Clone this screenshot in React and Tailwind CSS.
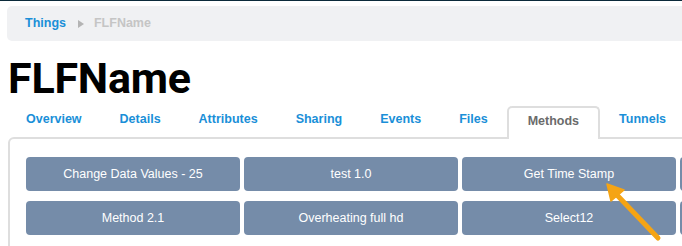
import { useState } from "react";

const tabs = ["Overview", "Details", "Attributes", "Sharing", "Events", "Files", "Methods", "Tunnels"];

const methods = [
  "Change Data Values - 25",
  "test 1.0",
  "Get Time Stamp",
  "",
  "Method 2.1",
  "Overheating full hd",
  "Select12",
  "",
];

export default function App() {
  const [active, setActive] = useState("Methods");

  return (
    <div className="relative w-[682px] h-[246px] overflow-hidden bg-white font-['Liberation_Sans',Arial,sans-serif]">
      <div className="h-px bg-[#0b2a3a]" />

      <div className="px-[7px]">
        <div className="mt-[5px] h-[35px] w-[900px] rounded-[5px] bg-[#f0f1f3] flex items-center pl-[18px] text-[12.5px] font-bold">
          <span className="text-[#1a8fd8]">Things</span>
          <svg width="6" height="8" viewBox="0 0 6 8" className="ml-[12px] mr-[10px]">
            <path d="M0 0 L6 4 L0 8 Z" fill="#b4b4b4" />
          </svg>
          <span className="text-[#c5c5c5]">FLFName</span>
        </div>

        <h1 className="mt-[16px] h-[43px] leading-[43px] pl-[1px] text-[43px] font-bold text-black font-['Roboto',sans-serif] tracking-[-0.2px]">
          FLFName
        </h1>

        <div className="relative z-10 mt-[6px] -mb-[2px] flex items-end h-[33px] text-[12.5px] font-bold">
          {tabs.map((t) =>
            t === active ? (
              <button
                key={t}
                onClick={() => setActive(t)}
                className="h-[33px] px-[19px] pb-[5px] border-2 border-b-0 border-[#dedede] rounded-t-[5px] bg-white text-[#6b6b6b]"
              >
                {t}
              </button>
            ) : (
              <button
                key={t}
                onClick={() => setActive(t)}
                className="h-[31px] px-[19px] pb-[9px] text-[#1a8fd8]"
              >
                {t}
              </button>
            )
          )}
        </div>

        <div className="ml-px w-[940px] border-2 border-[#dedede] rounded-[6px] pt-[18px] pl-[16px] pb-[20px]">
          <div className="grid grid-cols-[repeat(4,214px)] gap-x-[4px] gap-y-[10px]">
            {methods.map((m, i) => (
              <button
                key={i}
                className="h-[34px] rounded-[4px] bg-[#758ca9] text-white text-[12.5px] text-center"
              >
                {m}
              </button>
            ))}
          </div>
        </div>
      </div>

      <svg className="absolute inset-0 pointer-events-none" width="682" height="246">
        <line x1="658" y1="238" x2="616" y2="194" stroke="#f5a414" strokeWidth="5" strokeLinecap="round" />
        <path d="M607 184 L624 190 L611 201 Z" fill="#f5a414" stroke="#f5a414" strokeWidth="1.5" strokeLinejoin="round" />
      </svg>
    </div>
  );
}
